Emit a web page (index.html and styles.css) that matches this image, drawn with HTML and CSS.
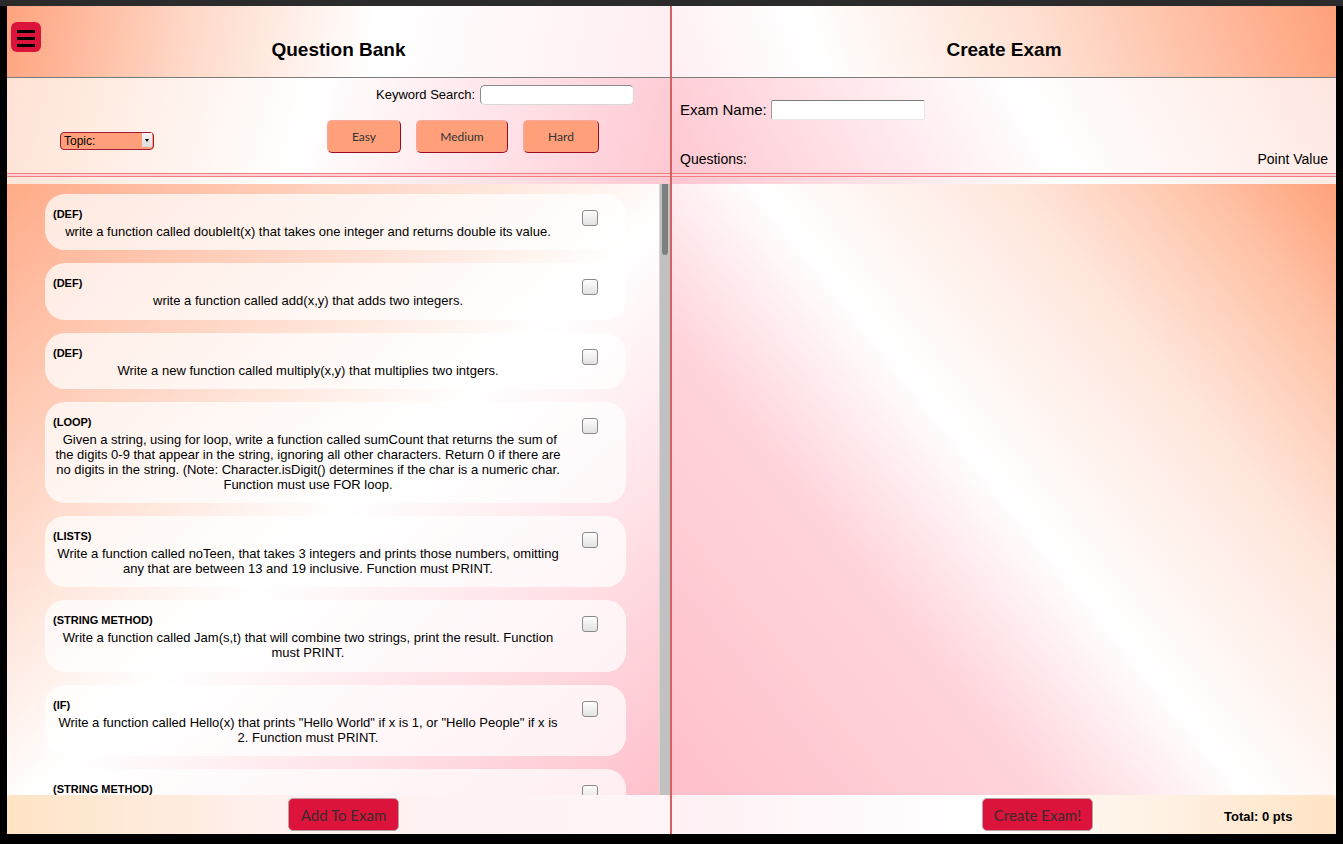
FILE: index.html
```html
<!DOCTYPE html>
<html>
<head>
    <title>Create Exam</title>
    <link rel="stylesheet" href="styles.css">
</head>
<body>
    <div class="topbar"></div>
    <div id="app">
        <section class="panel bank">
            <header class="panel-head bank-head">
                <button class="menu-btn"><span></span><span></span><span></span></button>
                <h3>Question Bank</h3>
            </header>
            <div class="controls bank-controls">
                <div class="search-row">
                    <label for="keyword">Keyword Search:</label>
                    <input type="text" id="keyword" class="search-input">
                </div>
                <div class="filter-row">
                    <span class="topic-wrap">
                        <select class="topic"><option>Topic:</option></select>
                        <span class="topic-arrow"></span>
                    </span>
                    <div class="levels">
                        <button class="level-btn easy">Easy</button>
                        <button class="level-btn medium">Medium</button>
                        <button class="level-btn hard">Hard</button>
                    </div>
                </div>
                <div class="double-rule"></div>
            </div>
            <div class="bank-body">
                <div class="question-list">
                    <div class="question">
                        <div class="q-text">
                            <div class="q-cat">(DEF)</div>
                            <div class="q-desc">write a function called doubleIt(x) that takes one integer and returns double its value.</div>
                        </div>
                        <input type="checkbox" class="q-check">
                    </div>
                    <div class="question">
                        <div class="q-text">
                            <div class="q-cat">(DEF)</div>
                            <div class="q-desc">write a function called add(x,y) that adds two integers.</div>
                        </div>
                        <input type="checkbox" class="q-check">
                    </div>
                    <div class="question">
                        <div class="q-text">
                            <div class="q-cat">(DEF)</div>
                            <div class="q-desc">Write a new function called multiply(x,y) that multiplies two intgers.</div>
                        </div>
                        <input type="checkbox" class="q-check">
                    </div>
                    <div class="question">
                        <div class="q-text">
                            <div class="q-cat">(LOOP)</div>
                            <div class="q-desc">&nbsp;Given a string, using for loop, write a function called sumCount that returns the sum of the digits 0-9 that appear in the string, ignoring all other characters. Return 0 if there are no digits in the string. (Note: Character.isDigit() determines if the char is a numeric char. Function must use FOR loop.</div>
                        </div>
                        <input type="checkbox" class="q-check">
                    </div>
                    <div class="question">
                        <div class="q-text">
                            <div class="q-cat">(LISTS)</div>
                            <div class="q-desc">Write a function called noTeen, that takes 3 integers and prints those numbers, omitting any that are between 13 and 19 inclusive. Function must PRINT.</div>
                        </div>
                        <input type="checkbox" class="q-check">
                    </div>
                    <div class="question">
                        <div class="q-text">
                            <div class="q-cat">(STRING METHOD)</div>
                            <div class="q-desc">Write a function called Jam(s,t) that will combine two strings, print the result. Function must PRINT.</div>
                        </div>
                        <input type="checkbox" class="q-check">
                    </div>
                    <div class="question">
                        <div class="q-text">
                            <div class="q-cat">(IF)</div>
                            <div class="q-desc">Write a function called Hello(x) that prints "Hello World" if x is 1, or "Hello People" if x is 2. Function must PRINT.</div>
                        </div>
                        <input type="checkbox" class="q-check">
                    </div>
                    <div class="question">
                        <div class="q-text">
                            <div class="q-cat">(STRING METHOD)</div>
                        </div>
                        <input type="checkbox" class="q-check">
                    </div>
                </div>
                <div class="scrollbar"><div class="scroll-thumb"></div></div>
            </div>
            <footer class="panel-foot bank-foot">
                <button class="action-btn">Add To Exam</button>
            </footer>
        </section>

        <section class="panel exam">
            <header class="panel-head exam-head">
                <h3>Create Exam</h3>
            </header>
            <div class="controls exam-controls">
                <div class="name-row">
                    <label for="exam-name">Exam Name:</label>
                    <input type="text" id="exam-name" class="name-input">
                </div>
                <div class="columns-row">
                    <span>Questions:</span>
                    <span>Point Value</span>
                </div>
                <div class="double-rule"></div>
            </div>
            <div class="exam-body"></div>
            <footer class="panel-foot exam-foot">
                <button class="action-btn">Create Exam!</button>
                <span class="total">Total: 0 pts</span>
            </footer>
        </section>
    </div>
</body>
</html>
```

FILE: styles.css
```css
html {
    background: #000;
}
body {
    margin: 0;
    font-family: "Liberation Sans", Arial, sans-serif;
    color: #000;
}
.topbar {
    height: 6px;
    background: #2b2b2b;
}
#app {
    display: flex;
    height: 828px;
    padding: 0 7px 10px;
}
.panel {
    display: flex;
    flex-direction: column;
}
.bank {
    width: 663px;
    border-right: 2px solid #d46262;
    background: #ffe6e6;
}
.exam {
    width: 664px;
    background: #ffe8ea;
}

/* headers */
.panel-head {
    position: relative;
    height: 71px;
    border-bottom: 1px solid #7c7c7c;
    text-align: center;
}
.panel-head h3 {
    margin: 0;
    padding-top: 33px;
    font-size: 19px;
    line-height: 22px;
}
.bank-head {
    background: linear-gradient(100deg, #ffa37e 0%, #ffd9c9 28%, #fff 55%, #ffeef1 100%);
}
.exam-head {
    background: linear-gradient(70deg, #fff0f2 0%, #fff 22%, #ffe0d2 55%, #ffa07a 100%);
}
.menu-btn {
    position: absolute;
    left: 4px;
    top: 16px;
    width: 30px;
    height: 30px;
    padding: 6px 0 0;
    border: none;
    border-radius: 6px;
    background: #dc143c;
    cursor: pointer;
}
.menu-btn span {
    display: block;
    width: 18px;
    height: 3px;
    margin: 0 auto 4px;
    background: #000;
}

/* controls */
.controls {
    display: flex;
    flex-direction: column;
    height: 106px;
    box-sizing: border-box;
}
.bank-controls {
    padding-top: 7px;
    background: linear-gradient(105deg, #ffe2d4 0%, #fff 45%, #ffc8d2 100%);
}
.search-row {
    display: flex;
    justify-content: flex-end;
    align-items: center;
    padding-right: 36px;
    font-size: 13px;
    line-height: 15px;
}
.search-row label {
    margin-right: 5px;
    margin-top: -1px;
}
.search-input {
    width: 154px;
    height: 20px;
    box-sizing: border-box;
    border: 1px solid #d8d8d8;
    border-top-color: #8a8a8a;
    border-left-color: #8a8a8a;
    border-radius: 5px;
    background: #fff;
}
.filter-row {
    display: flex;
    align-items: flex-end;
    margin-top: 15px;
}
.topic-wrap {
    position: relative;
    margin-left: 53px;
    margin-bottom: 3px;
}
.topic {
    appearance: none;
    width: 94px;
    height: 18px;
    padding: 0 0 0 3px;
    border: 1px solid #a01b36;
    border-radius: 4px;
    background: #ffa07a;
    font-family: "Liberation Sans", Arial, sans-serif;
    font-size: 12px;
    color: #000;
}
.topic-arrow {
    position: absolute;
    right: 2px;
    top: 2px;
    width: 10px;
    height: 14px;
    background: linear-gradient(#f6f6f6, #dcdcdc);
}
.topic-arrow::after {
    content: "";
    position: absolute;
    left: 3px;
    top: 6px;
    border-left: 2px solid transparent;
    border-right: 2px solid transparent;
    border-top: 3px solid #000;
}
.levels {
    display: flex;
    gap: 15px;
    margin-left: 173px;
}
.level-btn {
    height: 33px;
    padding: 0;
    border: 1px solid #9b0a23;
    border-top-color: #f6a8a0;
    border-left-color: #f6a8a0;
    border-radius: 5px;
    background: #ffa07a;
    color: #333;
    font-family: Lato, "Open Sans", sans-serif;
    font-size: 12px;
    cursor: pointer;
}
.easy { width: 74px; }
.medium { width: 92px; }
.hard { width: 76px; }
.double-rule {
    height: 2px;
    margin-top: auto;
    margin-bottom: 7px;
    border-top: 1px solid #f08080;
    border-bottom: 1px solid #f08080;
    background: #ffd0d6;
}
.exam-controls {
    padding-top: 22px;
    background: linear-gradient(60deg, #ffc6d0 0%, #fff 55%, #ffe6e0 100%);
}
.name-row {
    display: flex;
    align-items: center;
    padding: 0 8px;
    font-size: 15px;
    line-height: 17px;
}
.name-row label {
    margin-right: 4px;
    margin-top: -1px;
}
.name-input {
    width: 154px;
    height: 20px;
    box-sizing: border-box;
    border: 1px solid #e6e6e6;
    border-top-color: #7a7a7a;
    border-left-color: #9a9a9a;
    border-radius: 2px;
    background: #fff;
}
.columns-row {
    display: flex;
    justify-content: space-between;
    margin-top: 31px;
    padding: 0 8px;
    font-size: 14px;
    line-height: 16px;
}

/* question bank list */
.bank-body {
    display: flex;
    height: 611px;
    background: linear-gradient(to bottom right, #ffab88 0%, #fff 52%, #ffc0cb 100%);
}
.question-list {
    flex: 1;
    overflow: hidden;
    padding: 10px 0 0 38px;
}
.question {
    display: flex;
    align-items: flex-start;
    width: 581px;
    box-sizing: border-box;
    margin-bottom: 13px;
    padding: 14px 8px 11.3px;
    border-radius: 20px;
    background: rgba(255, 255, 255, 0.72);
}
.q-text {
    width: 510px;
}
.q-cat {
    font-size: 11px;
    font-weight: bold;
    line-height: 13px;
}
.q-desc {
    margin-top: 3px;
    font-size: 13px;
    line-height: 15px;
    text-align: center;
}
.q-check {
    appearance: none;
    width: 16px;
    height: 16px;
    margin: 2px 0 0 19px;
    border: 1px solid #8a8a8a;
    border-radius: 3px;
    background: linear-gradient(#fdfdfd, #e2e2e2);
}
.scrollbar {
    width: 10px;
    border-left: 1px solid #d6d6d6;
    background: #c1c1c1;
}
.scroll-thumb {
    width: 6px;
    height: 71px;
    margin-left: 2px;
    border-radius: 0 0 3px 3px;
    background: #7e8080;
}

/* exam body */
.exam-body {
    height: 611px;
    background: linear-gradient(51deg, #ffc0cb 0%, #ffd4da 32%, #fff 50%, #ffe6dc 72%, #ffc4a8 88%, #ffa07a 100%);
}

/* footers */
.panel-foot {
    display: flex;
    align-items: flex-start;
    height: 39px;
    box-sizing: border-box;
    padding-top: 3px;
    border-radius: 6px 6px 0 0;
}
.bank-foot {
    padding-left: 281px;
    background: linear-gradient(to right, #ffe4c4 0%, #fff0ee 40%, #fff5f8 100%);
}
.exam-foot {
    padding-left: 310px;
    background: linear-gradient(to right, #fff0f4 0%, #fff 45%, #fff0e2 75%, #ffe4c4 100%);
}
.action-btn {
    width: 111px;
    height: 33px;
    padding: 0;
    border: 1px solid #b8a0a4;
    border-radius: 5px;
    background: #dc143c;
    color: #3a2a2c;
    font-family: Lato, "Open Sans", sans-serif;
    font-size: 15px;
    cursor: pointer;
}
.total {
    margin: 11px 0 0 131px;
    font-size: 13px;
    font-weight: bold;
}
```
